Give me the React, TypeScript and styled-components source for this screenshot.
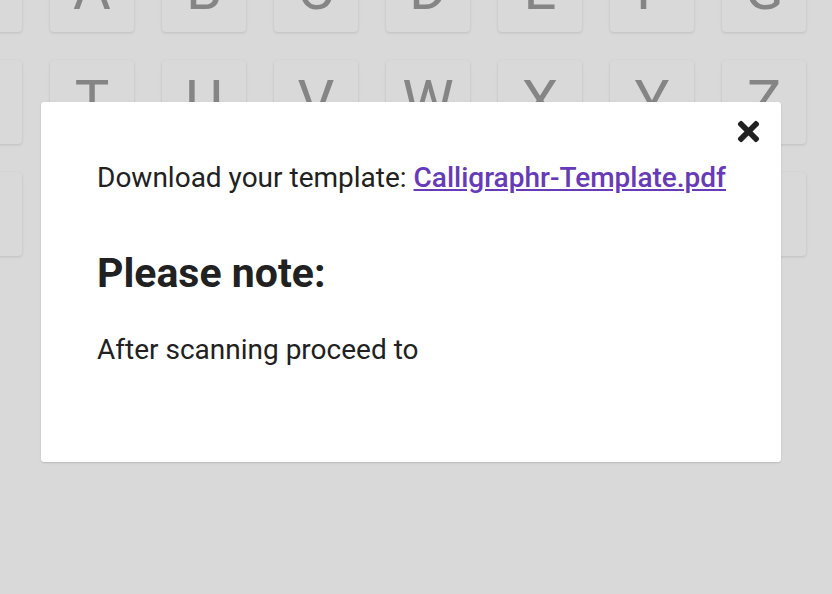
import React from 'react'
import styled, { createGlobalStyle } from 'styled-components'
import { FaTimes } from 'react-icons/fa'

const GlobalStyle = createGlobalStyle`
    html, body {
        margin: 0;
        padding: 0;
        width: 832px;
        height: 594px;
        overflow: hidden;
        background: #d9d9d9;
        font-family: Roboto, "Liberation Sans", sans-serif;
    }
`

const PAGE = styled.div`
    position: relative;
    width: 832px;
    height: 594px;
    overflow: hidden;
    background: #d9d9d9;
`

const KEY_GRID = styled.div`
    display: grid;
    grid-template-columns: repeat(8, 84px);
    grid-auto-rows: 84px;
    gap: 28px;
    margin: -52px 0 0 -62px;
`

const KEY = styled.div`
    display: flex;
    align-items: center;
    justify-content: center;
    background: #d9d9d9;
    border-radius: 4px;
    box-shadow: 0 1px 3px rgba(0, 0, 0, 0.12);
    color: #858585;
    font-size: 58px;
    line-height: 1;
    padding-bottom: 2px;
    box-sizing: border-box;
`

const MODAL = styled.div`
    position: absolute;
    top: 102px;
    left: 41px;
    width: 740px;
    height: 360px;
    box-sizing: border-box;
    padding: 55px 40px 0 56px;
    background: #fff;
    border-radius: 3px;
    box-shadow: 0 1px 2px rgba(0, 0, 0, 0.15);
    color: #212121;
`

const CLOSE = styled.button`
    position: absolute;
    top: 14px;
    right: 17px;
    padding: 0;
    border: none;
    background: none;
    color: #212121;
    display: flex;
    cursor: pointer;
`

const TEXT = styled.p<{ $gap?: number }>`
    margin: ${p => p.$gap ?? 0}px 0 0;
    font-size: 28px;
    line-height: 1.5;
    white-space: nowrap;
`

const LINK = styled.a`
    color: #673ab7;
    font-weight: 500;
    text-decoration: underline;
`

const HEADING = styled.h2`
    margin: 50px 0 0;
    font-size: 41px;
    line-height: 1.2;
    font-weight: 700;
`

const ROWS = [
    ['', 'A', 'B', 'C', 'D', 'E', 'F', 'G'],
    ['', 'T', 'U', 'V', 'W', 'X', 'Y', 'Z'],
    ['', '', '', '', '', '', '', ''],
]

const App = () => {
    return (
        <PAGE>
            <GlobalStyle />
            <KEY_GRID>
                {ROWS.flat().map((c, i) => (
                    <KEY key={i}>{c}</KEY>
                ))}
            </KEY_GRID>

            <MODAL>
                <CLOSE aria-label="close">
                    <FaTimes size={31} />
                </CLOSE>
                <TEXT>
                    Download your template: <LINK href="#">Calligraphr-Template.pdf</LINK>
                </TEXT>
                <HEADING>Please note:</HEADING>
                <TEXT $gap={31}>After scanning proceed to</TEXT>
            </MODAL>
        </PAGE>
    )
}

export default App
